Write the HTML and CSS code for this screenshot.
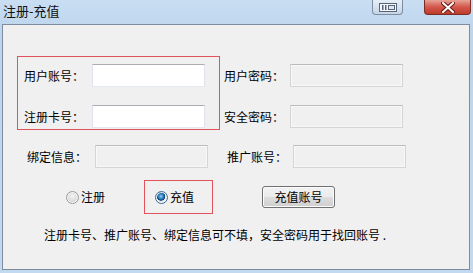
FILE: index.html
```html
<!DOCTYPE html>
<html lang="zh-CN">
<head>
  <meta charset="UTF-8" />
  <title>注册-充值</title>
  <link rel="stylesheet" href="styles.css">
</head>
<body>
  <div class="window">
    <div class="titlebar">
      <span class="title">注册-充值</span>
      <div class="title-buttons">
        <span class="tb-btn tb-restore">
          <svg width="18" height="9" viewBox="0 0 18 9">
            <rect x="0.5" y="0.5" width="17" height="8" fill="#f4f7fb" stroke="#56657a" />
            <rect x="3" y="2" width="1.5" height="5" fill="#56657a" />
            <rect x="6" y="2" width="1.5" height="5" fill="#56657a" />
            <rect x="9.5" y="2.5" width="6" height="4" fill="#dfe6ef" stroke="#56657a" stroke-width="1" />
          </svg>
        </span>
        <span class="tb-btn tb-close">
          <svg width="14" height="11" viewBox="0 0 14 11">
            <path d="M2 1 L12 10 M12 1 L2 10" stroke="#6b1a12" stroke-width="4" stroke-linecap="square" />
            <path d="M2 1 L12 10 M12 1 L2 10" stroke="#ffffff" stroke-width="2" stroke-linecap="square" />
          </svg>
        </span>
      </div>
    </div>

    <div class="client">
      <div class="top-row">
        <div class="mark-box account-box">
          <div class="field">
            <label class="lbl">用户账号：</label>
            <input type="text" class="txt">
          </div>
          <div class="field">
            <label class="lbl">注册卡号：</label>
            <input type="text" class="txt">
          </div>
        </div>
        <div class="right-group">
          <div class="field">
            <label class="lbl lbl-r">用户密码：</label>
            <input type="password" class="txt" disabled>
          </div>
          <div class="field">
            <label class="lbl lbl-r">安全密码：</label>
            <input type="password" class="txt" disabled>
          </div>
        </div>
      </div>

      <div class="mid-row">
        <div class="field">
          <label class="lbl">绑定信息：</label>
          <input type="text" class="txt" disabled>
        </div>
        <div class="field field-r">
          <label class="lbl lbl-r">推广账号：</label>
          <input type="text" class="txt" disabled>
        </div>
      </div>

      <div class="mode-row">
        <label class="radio">
          <input type="radio" name="mode">
          <span>注册</span>
        </label>
        <div class="mark-box mode-box">
          <label class="radio">
            <input type="radio" name="mode" checked>
            <span>充值</span>
          </label>
        </div>
        <button class="btn">充值账号</button>
      </div>

      <p class="note">注册卡号、推广账号、绑定信息可不填，安全密码用于找回账号 .</p>
    </div>
  </div>
</body>
</html>
```

FILE: styles.css
```css
* {
  margin: 0;
  padding: 0;
  box-sizing: border-box;
}

body {
  width: 473px;
  height: 273px;
  overflow: hidden;
  font-family: "Noto Sans CJK SC", "Microsoft YaHei", sans-serif;
  font-size: 12px;
  color: #000;
}

.window {
  width: 473px;
  height: 273px;
  display: flex;
  flex-direction: column;
  padding: 0 3px 3px 2px;
  background: linear-gradient(to bottom, #c9def3, #bdd5ed 30px, #c3d9ef);
}

.titlebar {
  height: 24px;
  display: flex;
  align-items: flex-start;
  justify-content: space-between;
}

.title {
  margin: 2px 0 0 1px;
  line-height: 17px;
  font-size: 13px;
  color: #111;
}

.title-buttons {
  display: flex;
  gap: 21px;
}

.tb-btn {
  display: flex;
  align-items: center;
  justify-content: center;
  height: 15px;
  border: 1px solid #7b8ea5;
  border-top: none;
  border-radius: 0 0 4px 4px;
}

.tb-restore {
  width: 31px;
  background: linear-gradient(to bottom, #e6eef7, #c7d5e4);
}

.tb-close {
  width: 47px;
  margin-right: -1px;
  border-color: #7a2d25;
  background: linear-gradient(to bottom, #e7a397, #d2574a 50%, #c13a2a);
}

.client {
  flex: 1;
  background: #f0f0f0;
  border: 1px solid #7d8d9f;
}

/* top section: red box + right column */
.top-row {
  display: flex;
  align-items: flex-start;
  margin-top: 31px;
  padding-left: 14px;
}

.mark-box {
  outline: 1px solid #e2525b;
  outline-offset: -1px;
}

.account-box {
  width: 203px;
  height: 74px;
  padding: 8px 0 0 7px;
}

.account-box .field + .field,
.right-group .field + .field {
  margin-top: 18px;
}

.right-group {
  margin-left: 4px;
  padding-top: 8px;
}

.field {
  display: flex;
  align-items: center;
  height: 23px;
}

.lbl {
  width: 68px;
  line-height: 16px;
}

.lbl-r {
  width: 66px;
}

.txt {
  width: 113px;
  height: 23px;
  background: #fff;
  border: 1px solid #e2e3ea;
  border-top-color: #abadb3;
  border-bottom-color: #e3e9ef;
  outline: none;
}

.txt:disabled {
  background: #f0f0f0;
  border-color: #d5d5d5;
  border-top-color: #bcbcbc;
  box-shadow: inset 0 0 0 1px #f8f8f8;
}

.mid-row {
  display: flex;
  margin-top: 15px;
  padding-left: 24px;
}

.field-r {
  margin-left: 19px;
}

/* radio + button row */
.mode-row {
  display: flex;
  align-items: center;
  margin-top: 12px;
  padding-left: 63px;
  height: 34px;
}

.radio {
  display: flex;
  align-items: center;
  gap: 2px;
  line-height: 16px;
}

.radio input {
  appearance: none;
  width: 13px;
  height: 13px;
  border-radius: 50%;
  border: 1px solid #9a9a9a;
  background: radial-gradient(circle at 50% 40%, #f4f4f4, #d3d3d3 70%, #e8e8e8);
  box-shadow: inset 0 0 0 1px #f7f7f7;
}

.radio input:checked {
  border-color: #3c6f9c;
  background: radial-gradient(circle at 45% 40%, #8fd0f5 0, #2b7fc0 2.5px, #0b3f74 4px, #f2f2f2 4.6px, #dadada 6px);
}

.mode-box {
  width: 69px;
  height: 34px;
  margin-left: 39px;
  padding-left: 11px;
  display: flex;
  align-items: center;
}

.btn {
  width: 73px;
  height: 22px;
  margin-left: 49px;
  font-family: inherit;
  font-size: 12px;
  line-height: 16px;
  color: #000;
  border: 1px solid #707070;
  border-radius: 3px;
  background: linear-gradient(to bottom, #f2f2f2, #ebebeb 50%, #dddddd 51%, #cfcfcf);
  box-shadow: inset 0 0 0 1px #fcfcfc;
}

.note {
  margin-top: 13px;
  padding-left: 41px;
  line-height: 16px;
}
```
